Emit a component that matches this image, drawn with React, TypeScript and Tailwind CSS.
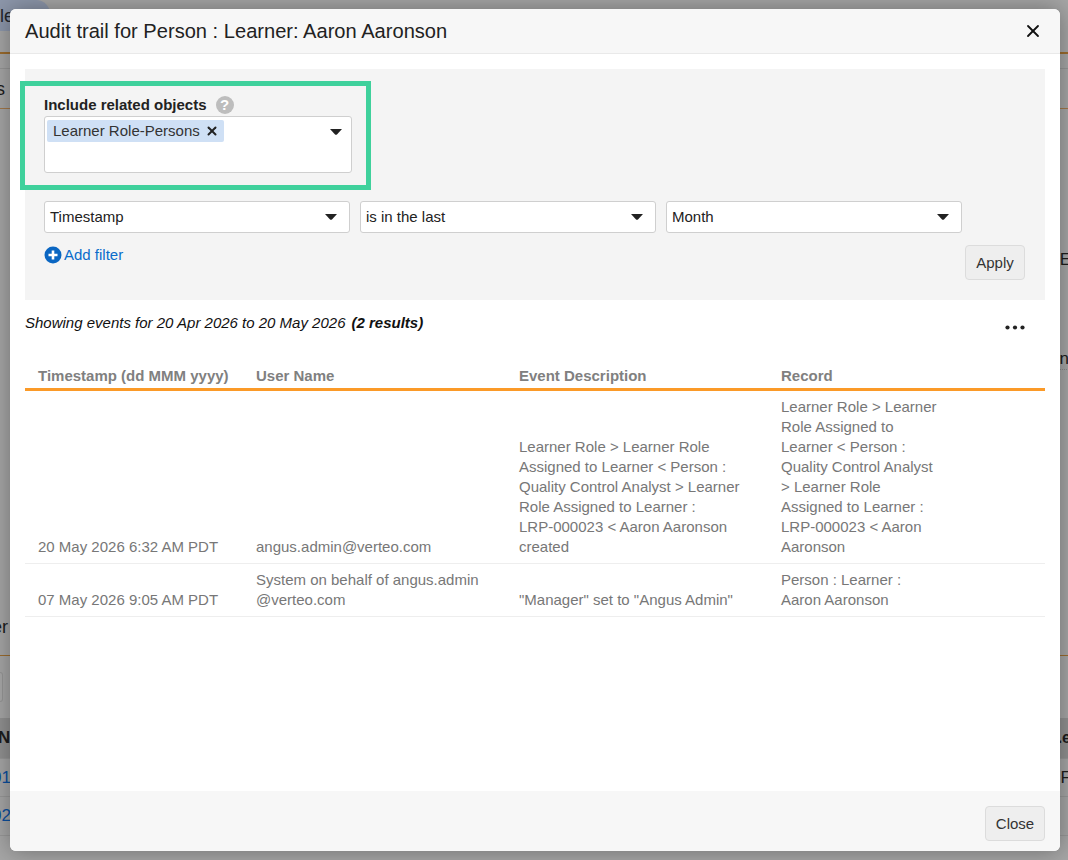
import React from "react";
import { X } from "lucide-react";

function Caret() {
  return (
    <svg width="12" height="6" viewBox="0 0 12 6" className="shrink-0">
      <path d="M0 0H12L7.2 5.2Q6 6.2 4.8 5.2Z" fill="#222" />
    </svg>
  );
}

function FilterSelect({ label, width }: { label: string; width: string }) {
  return (
    <div className={`flex h-[32px] items-center justify-between rounded-[3px] border border-[#cfcfcf] bg-white pl-[5px] pr-[12px] ${width}`}>
      <span>{label}</span>
      <Caret />
    </div>
  );
}

function Backdrop() {
  return (
    <div className="flex h-[860px] flex-col bg-[#a6a6a6] text-[17px] text-[#1c1c1c]">
      <div className="h-[52px]">
        <div className="flex h-[31px] w-[50px] items-center justify-start rounded-br-[14px] rounded-tr-[14px] bg-[#8d97ab] text-[18px] text-[#23262c]">
          <span className="ml-0">le</span>
        </div>
      </div>
      <div className="h-[2px] bg-[#9c6c2e]" />
      <div className="h-[15px] border-b border-[#969696]" />
      <div className="flex h-[40px] items-center justify-between border-b border-[#a3784a]">
        <span className="-ml-[4px] text-[18px]">s</span>
      </div>
      <div className="flex h-[159px] items-end justify-end">
        <span className="-mr-[3px] translate-y-[2px]">E</span>
      </div>
      <div className="flex h-[103px] items-end justify-end">
        <span className="-mr-[1px] translate-y-[-1px] border-b border-dotted border-[#888]">n</span>
      </div>
      <div className="h-[245px]" />
      <div className="flex h-[40px] items-start border-b border-[#9c6c2e]">
        <span className="-ml-[8px] pt-[1px] text-[18px]">er</span>
      </div>
      <div className="flex h-[62px] items-center">
        <div className="h-[30px] w-[3px] rounded-r-[3px] border border-l-0 border-[#969696] bg-[#a9a9a9]" />
      </div>
      <div className="flex h-[41px] items-center justify-between border-b border-[#989898] bg-[#919191] font-bold">
        <span className="-ml-[2px] text-[17px]">N</span>
        <span className="-mr-[3px] text-[16px]">.e</span>
      </div>
      <div className="flex h-[38px] items-center justify-between border-b border-[#989898]">
        <span className="-ml-[8px] text-[#0b4f9e]">01</span>
        <span className="-mr-[3px]">F</span>
      </div>
      <div className="flex h-[39px] items-center border-b border-[#989898]">
        <span className="-ml-[8px] text-[#0b4f9e]">02</span>
      </div>
    </div>
  );
}

const cell = "px-[13px] py-[6px] align-bottom font-normal";
const head = "h-[39px] px-[13px] pb-[2px] text-left align-bottom";
const lrp = <span className="whitespace-nowrap">LRP-000023</span>;

export default function App() {
  return (
    <div className="relative h-[860px] w-[1068px] overflow-hidden font-['Liberation_Sans',Arial,sans-serif] text-[15px] leading-[20px] text-[#222]">
      <Backdrop />
      <div className="absolute left-[10px] top-[9px] flex h-[842px] w-[1050px] flex-col rounded-[6px] bg-white shadow-[0_0_24px_rgba(0,0,0,0.35)]">
        <div className="flex h-[45px] shrink-0 items-center justify-between rounded-t-[6px] border-b border-[#e9e9e9] bg-[#f7f7f7] pl-[15px] pr-[17px]">
          <h1 className="text-[20.1px] font-normal leading-[24px] text-[#222]">Audit trail for Person : Learner: Aaron Aaronson</h1>
          <X size={20} strokeWidth={2.2} color="#111" />
        </div>

        <div className="flex min-h-0 flex-1 flex-col px-[15px] pt-[15px]">
          <div className="relative flex h-[231px] shrink-0 flex-col bg-[#f4f4f4] pl-[19px] pr-[20px] pt-[26px]">
            <div className="absolute left-[-5px] top-[12px] h-[109px] w-[351px] border-[5px] border-[#3fd19c]" />
            <div className="flex h-[20px] items-center gap-[9px] font-bold">
              <span>Include related objects</span>
              <span className="flex h-[18px] w-[18px] items-center justify-center rounded-full bg-[#bdbdbd] text-[15px] font-bold text-white">?</span>
            </div>
            <div className="mt-[1px] flex h-[57px] w-[308px] justify-between rounded-[3px] border border-[#cfcfcf] bg-white pl-[2px] pr-[9px] pt-[3px]">
              <div className="flex h-[22px] items-center gap-[5px] rounded-[2px] bg-[#cfe0f5] pl-[6px] pr-[5px] text-[#333]">
                <span>Learner Role-Persons</span>
                <X size={14} strokeWidth={3.4} color="#222" />
              </div>
              <div className="pt-[9px]">
                <Caret />
              </div>
            </div>
            <div className="mt-[28px] flex gap-[10px]">
              <FilterSelect label="Timestamp" width="w-[306px]" />
              <FilterSelect label="is in the last" width="w-[296px]" />
              <FilterSelect label="Month" width="w-[296px]" />
            </div>
            <div className="flex items-start justify-between">
              <div className="mt-[12px] flex h-[20px] items-center gap-[2px] text-[#0a6ccb]">
                <svg width="18" height="18" viewBox="0 0 18 18">
                  <circle cx="9" cy="9" r="8.5" fill="#0a66c2" />
                  <path d="M9 4.5V13.5M4.5 9H13.5" stroke="#fff" strokeWidth="2.6" />
                </svg>
                <span>Add filter</span>
              </div>
              <button className="mt-[12px] h-[35px] w-[60px] rounded-[4px] border border-[#dcdcdc] bg-[#eeeeee] text-[#333]">Apply</button>
            </div>
          </div>

          <div className="flex h-[50px] shrink-0 items-start justify-between pt-[13px] italic text-[#111]">
            <div>
              Showing events for 20 Apr 2026 to 20 May 2026<span className="ml-[6px] font-bold">(2 results)</span>
            </div>
            <svg width="20" height="5" viewBox="0 0 20 5" className="mr-[20px] mt-[12px]">
              <circle cx="2.5" cy="2.5" r="2.1" fill="#222" />
              <circle cx="10" cy="2.5" r="2.1" fill="#222" />
              <circle cx="17.5" cy="2.5" r="2.1" fill="#222" />
            </svg>
          </div>

          <table className="w-[1020px] table-fixed border-collapse text-[#777]">
            <colgroup>
              <col className="w-[218px]" />
              <col className="w-[263px]" />
              <col className="w-[262px]" />
              <col className="w-[277px]" />
            </colgroup>
            <thead>
              <tr className="border-b-[3px] border-[#fb9a28] font-bold text-[#808080]">
                <th className={head}>Timestamp (dd MMM yyyy)</th>
                <th className={head}>User Name</th>
                <th className={head}>Event Description</th>
                <th className={head}>Record</th>
              </tr>
            </thead>
            <tbody>
              <tr className="border-b border-[#eeeeee]">
                <td className={cell}>20 May 2026 6:32 AM PDT</td>
                <td className={cell}>angus.admin@verteo.com</td>
                <td className={cell}>
                  <div className="w-[228px]">Learner Role &gt; Learner Role Assigned to Learner &lt; Person : Quality Control Analyst &gt; Learner Role Assigned to Learner : {lrp} &lt; Aaron Aaronson created</div>
                </td>
                <td className={cell}>
                  <div className="w-[160px]">Learner Role &gt; Learner Role Assigned to Learner &lt; Person : Quality Control Analyst &gt; Learner Role Assigned to Learner : {lrp} &lt; Aaron Aaronson</div>
                </td>
              </tr>
              <tr className="border-b border-[#eeeeee]">
                <td className={cell}>07 May 2026 9:05 AM PDT</td>
                <td className={cell}>System on behalf of angus.admin<wbr />@verteo.com</td>
                <td className={cell}>"Manager" set to "Angus Admin"</td>
                <td className={cell}>
                  <div className="w-[160px]">Person : Learner : Aaron Aaronson</div>
                </td>
              </tr>
            </tbody>
          </table>
        </div>

        <div className="flex h-[60px] shrink-0 items-start justify-end rounded-b-[6px] bg-[#f7f7f7] pr-[15px] pt-[15px]">
          <button className="h-[35px] w-[60px] rounded-[4px] border border-[#dcdcdc] bg-[#eeeeee] text-[#333]">Close</button>
        </div>
      </div>
    </div>
  );
}
